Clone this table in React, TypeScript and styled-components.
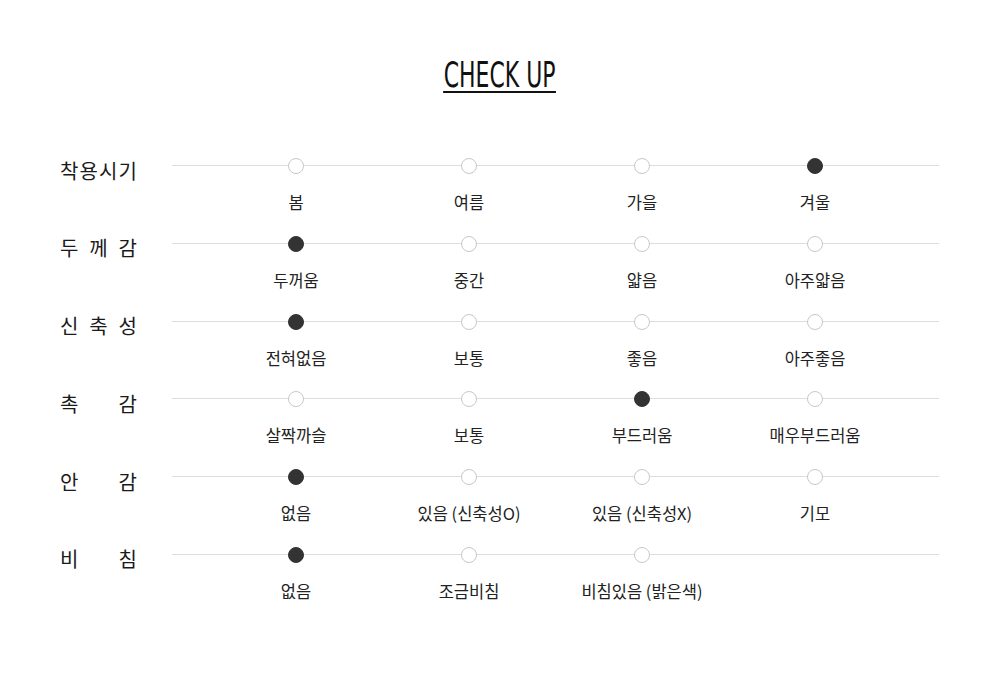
import styled, { createGlobalStyle } from "styled-components"

const GlobalStyle = createGlobalStyle`
  body {
    margin: 0;
    background: #fff;
    font-family: "Noto Sans CJK KR", "Noto Sans", sans-serif;
    color: #222;
  }
`

const Page = styled.div`
  width: 1000px;
  height: 686px;
  padding-top: 59px;
  box-sizing: border-box;
`

const TitleWrap = styled.div`
  display: flex;
  justify-content: center;
  align-items: flex-start;
  height: 40px;
`

const Title = styled.h2`
  margin: 0;
  flex: none;
  transform: scaleX(0.61);
  font-family: "DejaVu Sans", sans-serif;
  font-weight: 400;
  font-size: 36px;
  line-height: 32px;
  color: #111;
  border-bottom: 2px solid #111;
  padding: 0 1px;
`

const Table = styled.div`
  margin-top: 59px;
  padding-left: 60px;
  display: flex;
  flex-direction: column;
`

const Row = styled.div`
  display: flex;
  height: 77.8px;
`

const Label = styled.div`
  width: 77px;
  margin-right: 35px;
  height: 16px;
  margin-top: 4px;
  display: flex;
  justify-content: space-between;
  align-items: center;
  font-size: 20px;
  color: #1a1a1a;
`

const Track = styled.div`
  position: relative;
  box-sizing: border-box;
  width: 767px;
  display: grid;
  grid-template-columns: repeat(4, 173px);
  padding-left: 37.5px;
  align-content: start;
  &::before {
    content: "";
    position: absolute;
    left: 0;
    right: 0;
    top: 7px;
    height: 1px;
    background: #ddd;
  }
`

const Option = styled.div`
  display: flex;
  flex-direction: column;
  align-items: center;
  position: relative;
`

const Dot = styled.span<{ $on: boolean }>`
  width: 16px;
  height: 16px;
  box-sizing: border-box;
  border-radius: 50%;
  background: ${(p) => (p.$on ? "#333" : "#fff")};
  border: 1px solid ${(p) => (p.$on ? "#333" : "#c8c8c8")};
`

const OptionText = styled.span`
  margin-top: 18px;
  font-size: 16.5px;
  line-height: 20px;
  color: #222;
  white-space: nowrap;
`

const rows = [
  { label: "착용시기", options: ["봄", "여름", "가을", "겨울"], on: 3 },
  { label: "두께감", options: ["두꺼움", "중간", "얇음", "아주얇음"], on: 0 },
  { label: "신축성", options: ["전혀없음", "보통", "좋음", "아주좋음"], on: 0 },
  { label: "촉감", options: ["살짝까슬", "보통", "부드러움", "매우부드러움"], on: 2 },
  { label: "안감", options: ["없음", "있음 (신축성O)", "있음 (신축성X)", "기모"], on: 0 },
  { label: "비침", options: ["없음", "조금비침", "비침있음 (밝은색)"], on: 0 },
]

export default function App() {
  return (
    <Page>
      <GlobalStyle />
      <TitleWrap>
        <Title>CHECK UP</Title>
      </TitleWrap>
      <Table>
        {rows.map((row) => (
          <Row key={row.label}>
            <Label>
              {row.label.split("").map((ch, i) => (
                <span key={i}>{ch}</span>
              ))}
            </Label>
            <Track>
              {row.options.map((opt, i) => (
                <Option key={opt + i}>
                  <Dot $on={i === row.on} />
                  <OptionText>{opt}</OptionText>
                </Option>
              ))}
            </Track>
          </Row>
        ))}
      </Table>
    </Page>
  )
}
